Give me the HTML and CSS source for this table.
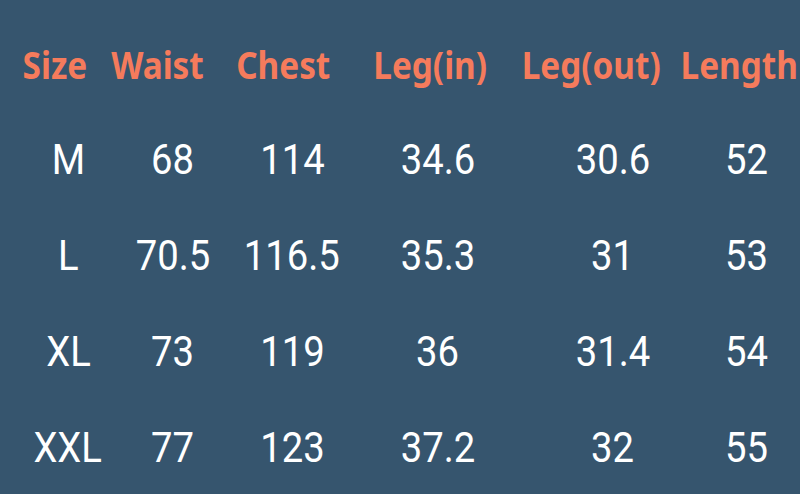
FILE: index.html
```html
<!DOCTYPE html>
<html>
<head>
<meta charset="utf-8">
<link rel="stylesheet" href="styles.css">
</head>
<body>
<div class="chart">
  <div class="head">
    <div class="h"><span>Size</span></div>
    <div class="h"><span>Waist</span></div>
    <div class="h"><span>Chest</span></div>
    <div class="h"><span>Leg(in)</span></div>
    <div class="h"><span>Leg(out)</span></div>
    <div class="h"><span>Length</span></div>
  </div>
  <div class="rows">
    <div class="c"><span>M</span></div><div class="c"><span>68</span></div><div class="c"><span>114</span></div><div class="c"><span>34.6</span></div><div class="c"><span>30.6</span></div><div class="c"><span>52</span></div>
    <div class="c"><span>L</span></div><div class="c"><span>70.5</span></div><div class="c"><span>116.5</span></div><div class="c"><span>35.3</span></div><div class="c"><span>31</span></div><div class="c"><span>53</span></div>
    <div class="c"><span>XL</span></div><div class="c"><span>73</span></div><div class="c"><span>119</span></div><div class="c"><span>36</span></div><div class="c"><span>31.4</span></div><div class="c"><span>54</span></div>
    <div class="c"><span>XXL</span></div><div class="c"><span>77</span></div><div class="c"><span>123</span></div><div class="c"><span>37.2</span></div><div class="c"><span>32</span></div><div class="c"><span>55</span></div>
  </div>
</div>
</body>
</html>
```
FILE: styles.css
```css
html, body {
  margin: 0;
  padding: 0;
}
body {
  background: #36556e;
  width: 800px;
  height: 494px;
  overflow: hidden;
}
.chart {
  padding-top: 35px;
}
.head {
  display: grid;
  grid-template-columns: 90px 114px 138px 156px 166px 114px;
  height: 60px;
  margin-left: 10px;
  align-items: center;
  margin-bottom: 17px;
}
.h {
  text-align: center;
  font-family: "Noto Sans", sans-serif;
  font-weight: 700;
  font-size: 37px;
  color: #f57b5c;
  line-height: 60px;
  white-space: nowrap;
}
.h span {
  display: inline-block;
  transform: scaleX(0.9);
}
.rows {
  display: grid;
  grid-template-columns: 100px 110px 128px 164px 186px 82px;
  grid-auto-rows: 96px;
  margin-left: 18px;
  align-items: center;
}
.c {
  text-align: center;
  font-family: Roboto, sans-serif;
  font-size: 42px;
  color: #ffffff;
  line-height: 96px;
  white-space: nowrap;
}
.c span {
  display: inline-block;
  transform: scaleX(0.91);
}
```
